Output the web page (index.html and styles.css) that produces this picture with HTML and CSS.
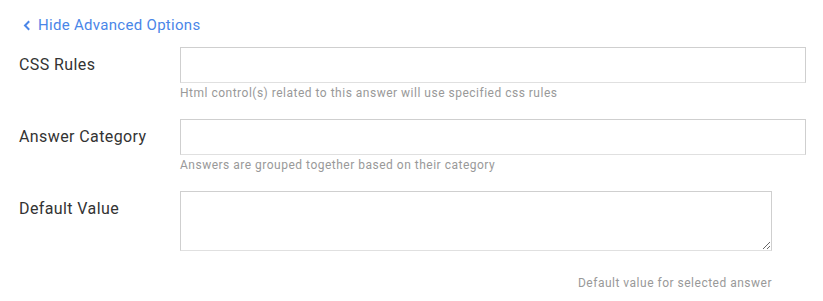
FILE: index.html
```html
<!DOCTYPE html>
<html>
<head>
<meta charset="utf-8">
<link rel="stylesheet" href="styles.css">
</head>
<body>
<div class="page">
  <a class="toggle" href="#">
    <svg class="chev" width="8" height="11" viewBox="0 0 8 11"><path d="M6.2 1.2 L2 5.5 L6.2 9.8" fill="none" stroke="#4a86e8" stroke-width="2"/></svg>
    <span>Hide Advanced Options</span>
  </a>
  <div class="row">
    <label class="label">CSS Rules</label>
    <div class="field">
      <input class="input" type="text">
      <div class="help">Html control(s) related to this answer will use specified css rules</div>
    </div>
  </div>
  <div class="row">
    <label class="label">Answer Category</label>
    <div class="field">
      <input class="input" type="text">
      <div class="help">Answers are grouped together based on their category</div>
    </div>
  </div>
  <div class="row">
    <label class="label">Default Value</label>
    <div class="field narrow">
      <textarea class="area"></textarea>
      <div class="help right">Default value for selected answer</div>
    </div>
  </div>
</div>
</body>
</html>
```
FILE: styles.css
```css
html, body {
  margin: 0;
  padding: 0;
  background: #fff;
}
.page {
  font-family: Roboto, "Liberation Sans", Arial, sans-serif;
  padding: 15px 0 0 19px;
}
.toggle {
  display: flex;
  align-items: center;
  height: 20px;
  margin-left: 4px;
  color: #4a86e8;
  font-size: 15px;
  line-height: 20px;
  letter-spacing: 0.3px;
  text-decoration: none;
}
.chev {
  display: block;
  margin-right: 7px;
}
.row {
  display: flex;
  margin-top: 12px;
}
.row + .row {
  margin-top: 17px;
}
.label {
  width: 161px;
  flex: none;
  font-size: 16px;
  line-height: 36px;
  letter-spacing: 0.4px;
  color: #333;
}
.field {
  width: 626px;
}
.field.narrow {
  width: 592px;
}
.input {
  display: block;
  box-sizing: border-box;
  width: 100%;
  height: 36px;
  margin: 0;
  border: 1px solid #cfcfcf;
  border-bottom-color: #e0e0e0;
  border-radius: 0;
  outline: none;
  padding: 6px 10px;
  font: inherit;
}
.area {
  display: block;
  box-sizing: border-box;
  width: 100%;
  height: 60px;
  margin: 0;
  border: 1px solid #cfcfcf;
  border-bottom-color: #e0e0e0;
  border-radius: 0;
  outline: none;
  padding: 6px 10px;
  font: inherit;
}
.help {
  margin-top: 2px;
  font-size: 12px;
  line-height: 17px;
  letter-spacing: 0.5px;
  color: #999;
}
.help.right {
  margin-top: 24px;
  text-align: right;
}
```
